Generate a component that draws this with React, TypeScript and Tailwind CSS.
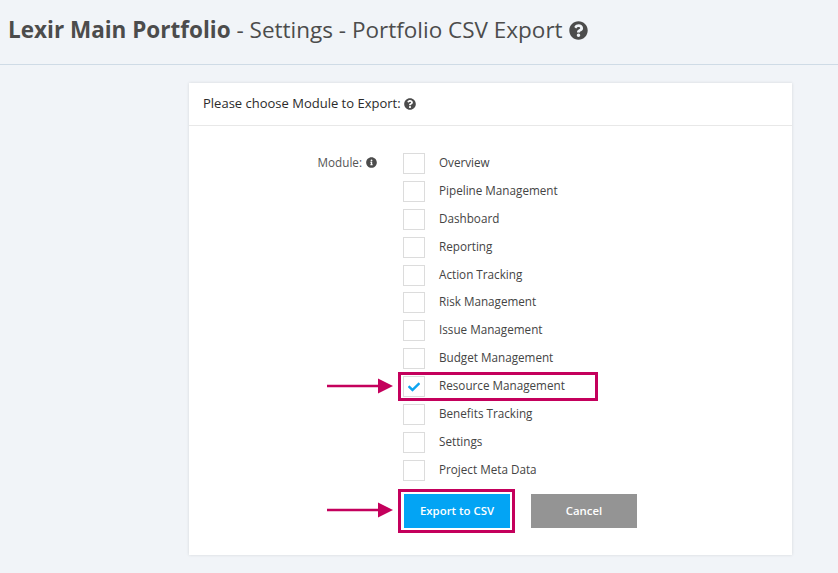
import React from "react";
import { FaCheck, FaInfoCircle, FaQuestionCircle } from "react-icons/fa";

const modules = [
  "Overview",
  "Pipeline Management",
  "Dashboard",
  "Reporting",
  "Action Tracking",
  "Risk Management",
  "Issue Management",
  "Budget Management",
  "Resource Management",
  "Benefits Tracking",
  "Settings",
  "Project Meta Data",
];

function Arrow({ className }: { className: string }) {
  return (
    <svg className={`absolute ${className}`} width="66" height="16" viewBox="0 0 66 16">
      <path d="M0 8H53" stroke="#c4005c" strokeWidth="2.5" />
      <path d="M51 0.5L66 8L51 15.5Z" fill="#c4005c" />
    </svg>
  );
}

function App() {
  return (
    <div className="h-[573px] w-[838px] overflow-hidden bg-[#f1f4f8] font-['Open_Sans',sans-serif]">
      <div className="flex h-[65px] items-center gap-[6px] border-b border-[#cfdbe6] pb-[4px] pl-[8px] text-[22.5px] text-[#4c4c4c]">
        <h1>
          <span className="font-bold">Lexir Main Portfolio</span> - Settings - Portfolio CSV Export
        </h1>
        <FaQuestionCircle className="text-[19px]" />
      </div>

      <div className="ml-[189px] mt-[18px] h-[472px] w-[603px] bg-white shadow-[0_0_3px_rgba(0,0,0,0.12)]">
        <div className="flex h-[43px] items-center gap-[3px] border-b border-[#e8e8e8] pl-[14px] text-[13px] font-medium text-[#2b2b2b]">
          Please choose Module to Export:
          <FaQuestionCircle className="text-[12px] text-[#4c4c4c]" />
        </div>

        <div className="flex pt-[27px]">
          <div className="flex w-[214px] justify-end pr-[26px] pt-[1px]">
            <div className="flex h-[17px] items-center gap-[4px] text-[11.7px] text-[#555]">
              Module:
              <FaInfoCircle className="text-[11px] text-[#4c4c4c]" />
            </div>
          </div>

          <div>
            {modules.map((name) => {
              const checked = name === "Resource Management";
              return (
                <div key={name} className="relative flex h-[27.9px] items-start">
                  <div className="flex h-[21px] w-[22px] items-center justify-center border border-[#dcdcdc] bg-white">
                    {checked && <FaCheck className="text-[12px] text-[#0ea5f0]" />}
                  </div>
                  <span className="ml-[14px] text-[11.7px] leading-[18px] text-[#444]">{name}</span>
                  {checked && (
                    <>
                      <div className="absolute left-[-5px] top-[-4px] h-[29px] w-[200px] border-[3px] border-[#c4005c]" />
                      <Arrow className="left-[-76px] top-[2px]" />
                    </>
                  )}
                </div>
              );
            })}

            <div className="mt-[6px] flex gap-[21px] pl-[1px]">
              <div className="relative">
                <button className="h-[34px] w-[106px] bg-[#03a4f4] text-[11.4px] font-semibold text-white">
                  Export to CSV
                </button>
                <div className="absolute left-[-6px] top-[-5px] h-[44px] w-[117px] border-[3px] border-[#c4005c]" />
                <Arrow className="left-[-77px] top-[8px]" />
              </div>
              <button className="h-[34px] w-[106px] bg-[#949494] text-[11.4px] font-semibold text-white">
                Cancel
              </button>
            </div>
          </div>
        </div>
      </div>
    </div>
  );
}

export default App;
